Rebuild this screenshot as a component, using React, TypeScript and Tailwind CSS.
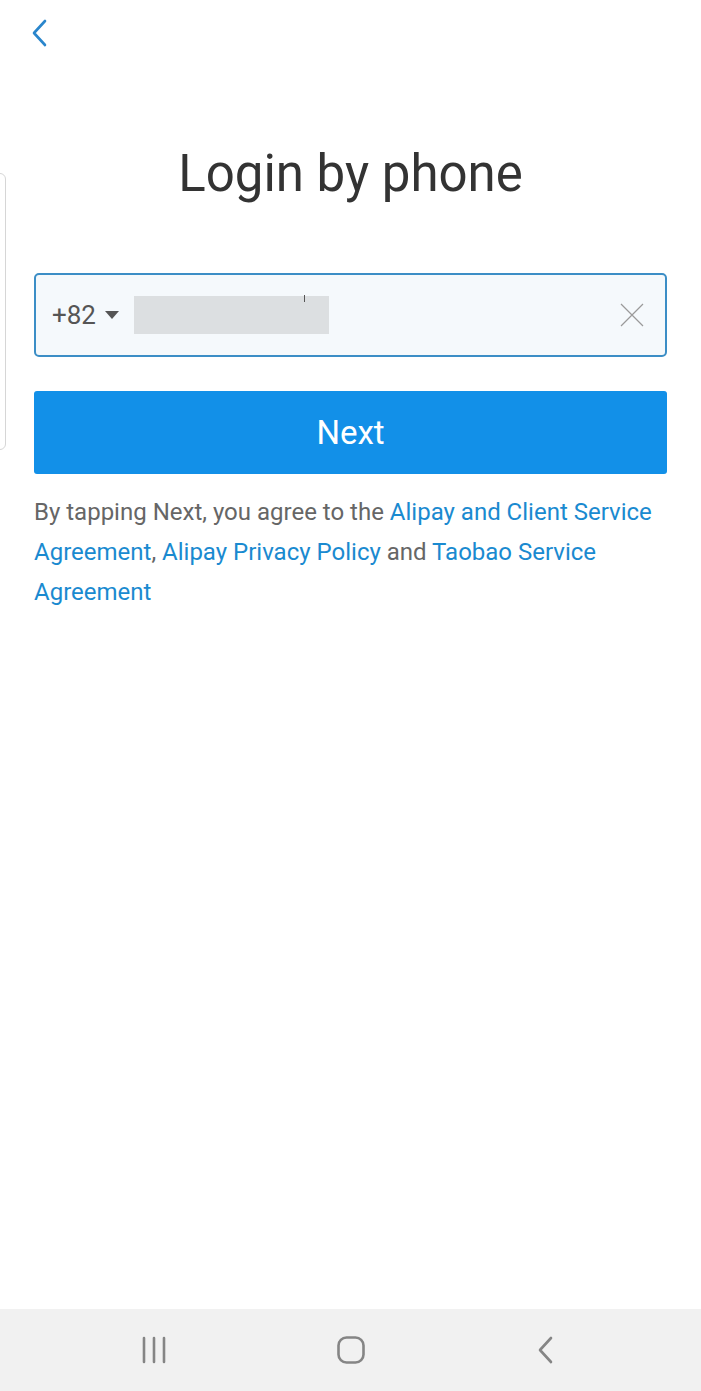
import React from "react";

export default function App() {
  return (
    <div className="w-[701px] h-[1391px] bg-white flex flex-col relative overflow-hidden" style={{ fontFamily: "Roboto, 'Noto Sans', sans-serif" }}>
      {/* stray card edge on the left */}
      <div className="absolute left-[-20px] top-[173px] w-[26px] h-[277px] border border-[#d6d6d6] rounded-[6px] bg-white" />

      <div className="flex-1 flex flex-col">
        <div className="h-[64px] flex items-center pl-[30px]">
          <svg width="20" height="30" viewBox="0 0 20 30">
            <path d="M15 4 L4 16 L15 28" fill="none" stroke="#2a86cc" strokeWidth="2.6" strokeLinecap="round" strokeLinejoin="round" />
          </svg>
        </div>

        <h1 className="text-center text-[51px] leading-[56px] text-[#333333] mt-[82px]">Login by phone</h1>

        <div className="mx-[34px] mt-[71px] h-[84px] border-2 border-[#3c8ec6] rounded-[5px] bg-[#f5f9fc] flex items-center pl-[16px] pr-[20px] relative">
          <span className="text-[26px] text-[#555555]">+82</span>
          <svg width="14" height="10" viewBox="0 0 14 10" className="ml-[9px]">
            <path d="M0 1 L14 1 L7 9 Z" fill="#555555" />
          </svg>
          <div className="ml-[15px] w-[195px] h-[38px] bg-[#dcdfe1]" />
          <div className="absolute left-[268px] top-[20px] w-px h-[7px] bg-[#555]" />
          <div className="flex-1" />
          <svg width="26" height="26" viewBox="0 0 26 26">
            <path d="M2 2 L24 24 M24 2 L2 24" stroke="#9a9a9a" strokeWidth="1.2" />
          </svg>
        </div>

        <button className="mx-[34px] mt-[34px] h-[83px] bg-[#1290e8] rounded-[3px] text-white text-[33px] flex items-center justify-center">Next</button>

        <p className="mx-[34px] mt-[18px] text-[24px] leading-[40px] text-[#666666]">
          By tapping Next, you agree to the <span className="text-[#1a8ad0]">Alipay and Client Service Agreement</span>, <span className="text-[#1a8ad0]">Alipay Privacy Policy</span> and <span className="text-[#1a8ad0]">Taobao Service Agreement</span>
        </p>
      </div>

      <div className="h-[82px] bg-[#f1f1f1] flex items-center justify-center gap-[168px]">
        <svg width="28" height="28" viewBox="0 0 28 28">
          <path d="M4 2 V26 M14 2 V26 M24 2 V26" stroke="#858585" strokeWidth="2.6" strokeLinecap="round" />
        </svg>
        <svg width="30" height="30" viewBox="0 0 30 30">
          <rect x="2.5" y="2.5" width="25" height="25" rx="8" fill="none" stroke="#858585" strokeWidth="2.6" />
        </svg>
        <svg width="28" height="30" viewBox="0 0 28 30">
          <path d="M17 3 L6 15 L17 27" fill="none" stroke="#858585" strokeWidth="2.6" strokeLinecap="round" strokeLinejoin="round" />
        </svg>
      </div>
    </div>
  );
}
